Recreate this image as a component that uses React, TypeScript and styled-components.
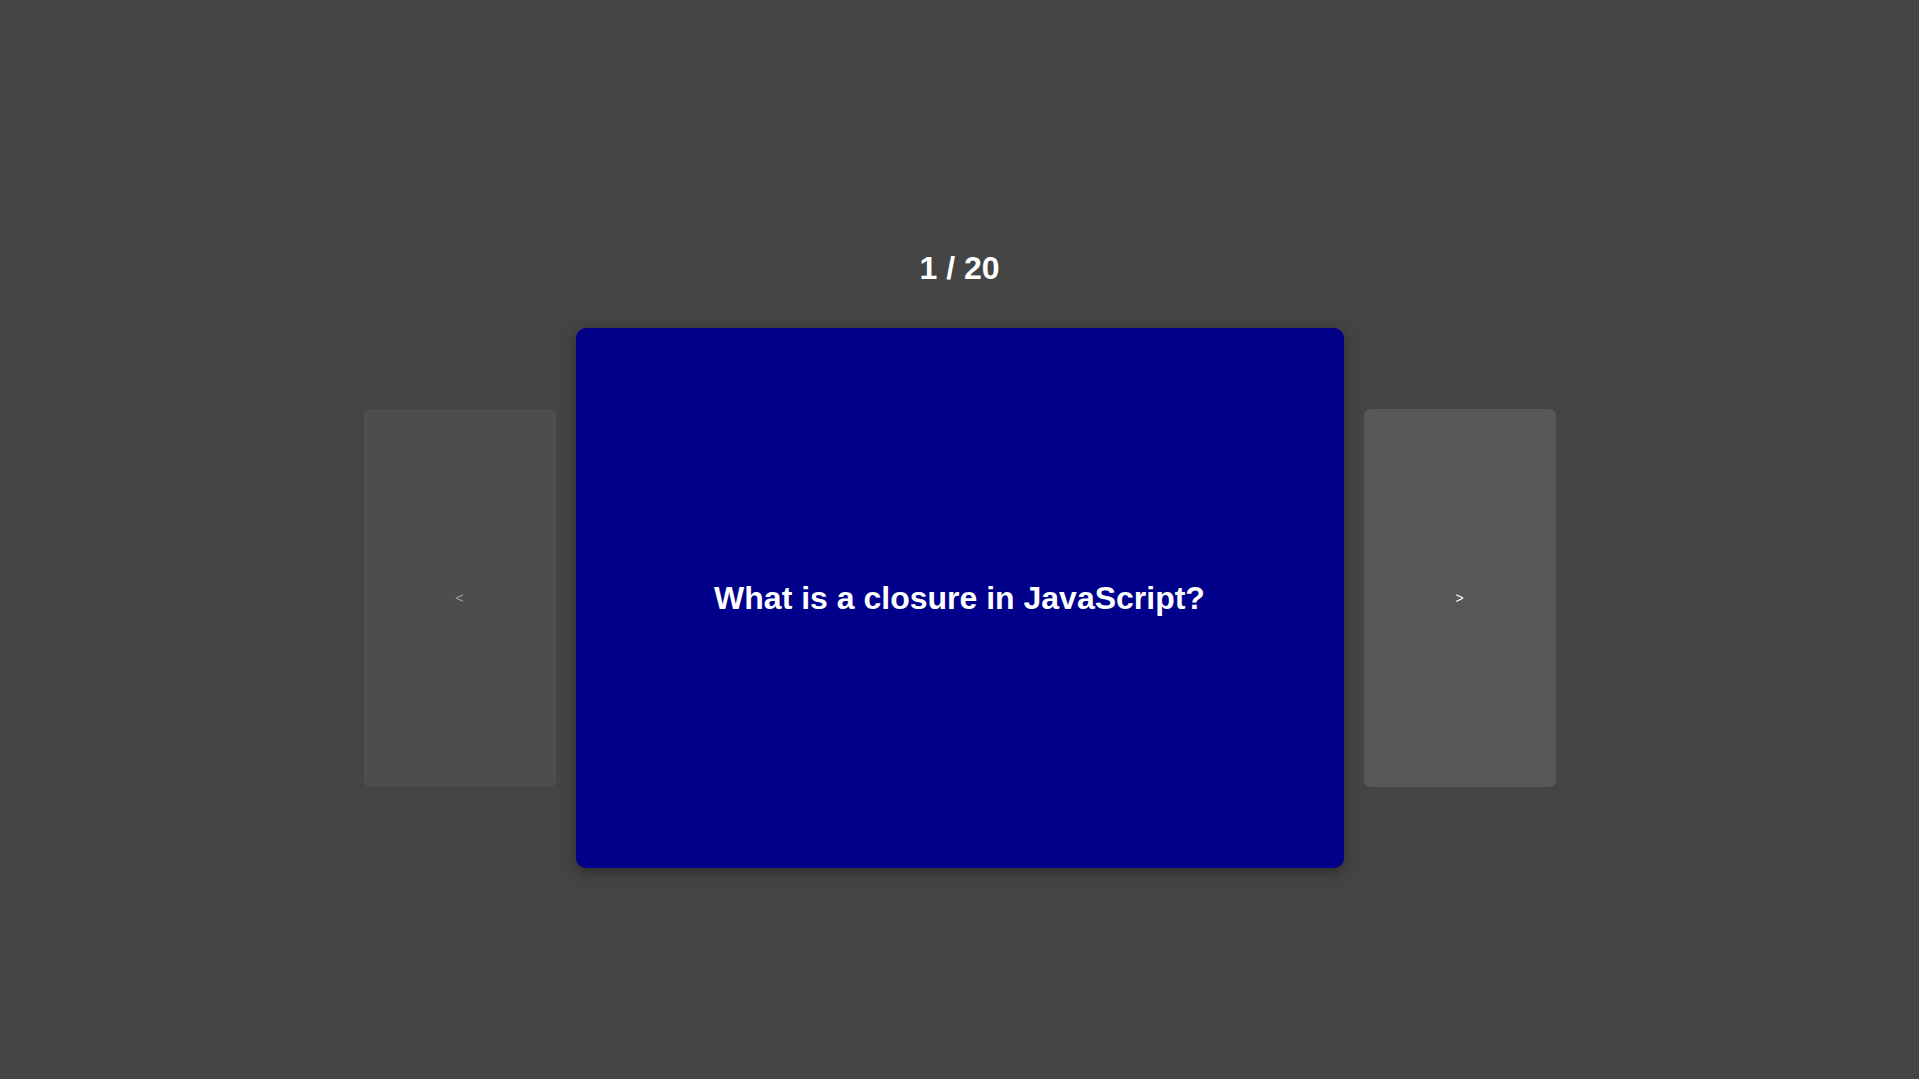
import React from "react";
import styled, { createGlobalStyle } from "styled-components";

const GlobalStyle = createGlobalStyle`
  html, body {
    margin: 0;
    padding: 0;
    background: #444444;
    font-family: "Liberation Sans", Arial, sans-serif;
  }
  #root {
    min-height: 100vh;
  }
`;

const Page = styled.main`
  min-height: 100vh;
  box-sizing: border-box;
  padding-top: 250px;
  display: flex;
  flex-direction: column;
  align-items: center;
  background: #444444;
`;

const Counter = styled.div`
  color: #ffffff;
  font-size: 32px;
  font-weight: 700;
  line-height: 37px;
  margin-bottom: 41px;
`;

const Carousel = styled.div`
  display: flex;
  align-items: center;
  gap: 20px;
`;

const SideCard = styled.button<{ $tint: number; $arrow: string }>`
  width: 192px;
  height: 378px;
  border: none;
  border-radius: 6px;
  padding: 0;
  background: rgba(255, 255, 255, ${(p) => p.$tint});
  color: ${(p) => p.$arrow};
  font-family: "Liberation Sans", Arial, sans-serif;
  font-size: 14px;
  display: flex;
  align-items: center;
  justify-content: center;
  cursor: pointer;
`;

const Card = styled.div`
  width: 768px;
  height: 540px;
  border-radius: 10px;
  background: #00008b;
  box-shadow: 0 4px 14px rgba(0, 0, 0, 0.35);
  display: flex;
  align-items: center;
  justify-content: center;
  box-sizing: border-box;
  padding: 24px;
`;

const Question = styled.h2`
  margin: 0;
  color: #ffffff;
  font-size: 32px;
  font-weight: 700;
  text-align: center;
`;

export default function App() {
  return (
    <>
      <GlobalStyle />
      <Page>
        <Counter>1 / 20</Counter>
        <Carousel>
          <SideCard $tint={0.05} $arrow="#9a9a9a" aria-label="Previous">
            &lt;
          </SideCard>
          <Card>
            <Question>What is a closure in JavaScript?</Question>
          </Card>
          <SideCard $tint={0.1} $arrow="#ffffff" aria-label="Next">
            &gt;
          </SideCard>
        </Carousel>
      </Page>
    </>
  );
}
